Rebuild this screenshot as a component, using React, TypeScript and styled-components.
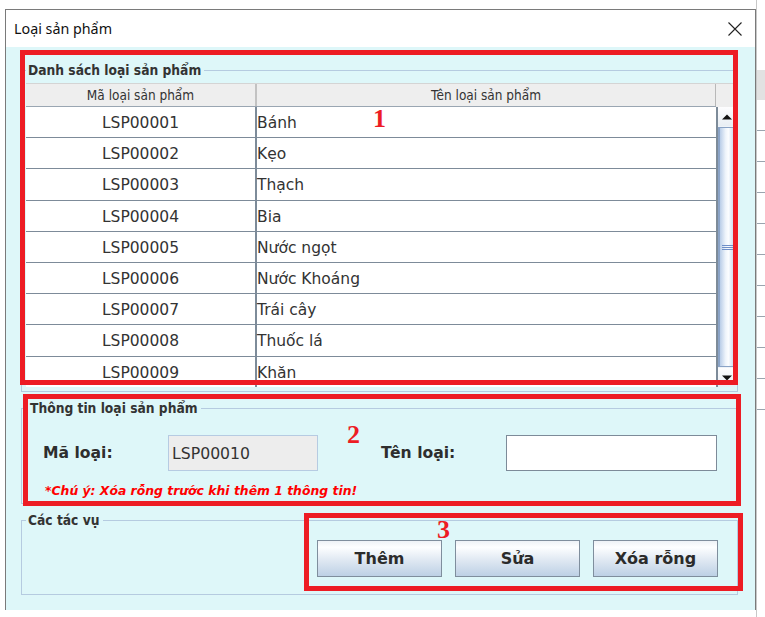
import styled, { createGlobalStyle } from "styled-components"

const GlobalStyle = createGlobalStyle`
  html, body {
    margin: 0;
    padding: 0;
  }
  body {
    background: #ffffff;
    font-family: "DejaVu Sans", Verdana, sans-serif;
    color: #333333;
  }
`

const Page = styled.div`
  display: flex;
  width: 765px;
  height: 617px;
  overflow: hidden;
  background: #ffffff;
`

const Window = styled.div`
  position: relative;
  display: flex;
  flex-direction: column;
  flex-shrink: 0;
  box-sizing: border-box;
  width: 751px;
  height: 601px;
  margin: 9px 0 0 5px;
  border: 1px solid #7a7a7a;
  background: #ffffff;
`

/* the app window behind the dialog, barely visible on the right */
const Backdrop = styled.div`
  flex: 1;
  border-left: 1px solid #c8c8c8;
  background:
    linear-gradient(#e2e2e2, #e2e2e2) 0 70px / 100% 30px no-repeat,
    repeating-linear-gradient(to bottom, transparent 0 30px, #9aa4ae 30px 31px) 0 100px / 100% 320px no-repeat,
    #ffffff;
`

const TitleBar = styled.div`
  display: flex;
  align-items: center;
  justify-content: space-between;
  flex-shrink: 0;
  height: 37px;
  padding: 0 13px 0 8px;
  font-family: "Noto Sans", sans-serif;
  font-size: 14.3px;
  color: #111111;
`

const Content = styled.div`
  flex: 1;
  display: flex;
  flex-direction: column;
  gap: 8px;
  padding: 15px 17px 15px 15px;
  background: #def7f9;
`

const Group = styled.fieldset`
  margin: 0;
  min-width: 0;
  padding: 0 2px 0 4px;
  border: 1px solid #b5cbe0;
`

const Legend = styled.legend<{ $inset?: number }>`
  margin-left: ${(p) => p.$inset ?? 0}px;
  padding: 0 3px 0 2px;
  font: bold 13.7px/16px "DejaVu Sans Condensed", "DejaVu Sans", sans-serif;
  color: #333333;
`

const TablePane = styled.div`
  display: grid;
  grid-template-columns: 1fr 19px;
  grid-template-rows: 24px 280px;
  margin: 5px 0 4px;
  background: #ffffff;
`

const HeaderRow = styled.div`
  display: grid;
  grid-template-columns: 229px 1fr;
  box-sizing: border-box;
  background: #eeeeee;
  border-top: 1px solid #d4d4d4;
  border-bottom: 1px solid #9aa6b2;
`

const HeaderCell = styled.div<{ $first?: boolean }>`
  font-family: "DejaVu Sans Condensed", "DejaVu Sans", sans-serif;
  font-size: 13.5px;
  line-height: 22px;
  text-align: center;
  color: #333333;
  border-left: ${(p) => (p.$first ? "none" : "2px solid #c2c2c2")};
  border-right: ${(p) => (p.$first ? "none" : "1px solid #b8b8b8")};
`

const HeaderCorner = styled.div`
  background: #eeeeee;
  border-top: 1px solid #d4d4d4;
`

const Body = styled.div`
  overflow: hidden;
`

const Row = styled.div`
  display: grid;
  grid-template-columns: 229px 1fr;
  box-sizing: border-box;
  height: 31.2px;
  border-bottom: 1px solid #7d8b99;
  font-size: 15.5px;
  color: #333333;
`

const Cell = styled.div<{ $first?: boolean }>`
  display: flex;
  align-items: center;
  justify-content: ${(p) => (p.$first ? "center" : "flex-start")};
  padding-top: 2px;
  white-space: nowrap;
  border-left: ${(p) => (p.$first ? "none" : "2px solid #7d8b99")};
`

const ScrollBar = styled.div`
  display: flex;
  flex-direction: column;
  gap: 1px;
  border-left: 2px solid #7d8b99;
  background: #eef3f8;
`

const ArrowButton = styled.div`
  display: flex;
  align-items: center;
  justify-content: center;
  height: 19px;
  background: linear-gradient(#fdfdfe, #e8eef4);
`

const Thumb = styled.div`
  flex: 1;
  display: flex;
  flex-direction: column;
  align-items: center;
  justify-content: center;
  gap: 1px;
  border: 1px solid #8aa3c6;
  border-left-width: 2px;
  background: linear-gradient(to right, #b9cde8, #eef4fb 40%, #fbfdff 60%, #c9d9ee);
`

const Grip = styled.span`
  width: 11px;
  height: 1px;
  background: #6f8fc8;
`

const InfoBody = styled.div`
  display: flex;
  flex-direction: column;
  padding: 19px 0 4px 17px;
`

const FieldRow = styled.div`
  display: flex;
  align-items: center;
  height: 36px;
`

const FieldLabel = styled.label<{ $spaced?: boolean }>`
  flex-shrink: 0;
  width: 125px;
  margin-left: ${(p) => (p.$spaced ? 63 : 0)}px;
  font: bold 15.6px "DejaVu Sans", sans-serif;
  color: #2e2e2e;
`

const TextBox = styled.input<{ $width: number; $locked?: boolean }>`
  box-sizing: border-box;
  flex-shrink: 0;
  width: ${(p) => p.$width}px;
  height: 36px;
  margin: 0;
  padding: 0 0 0 3px;
  border: 1px solid ${(p) => (p.$locked ? "#b6cbe2" : "#7d8b99")};
  border-radius: 0;
  background: ${(p) => (p.$locked ? "#ededed" : "#ffffff")};
  font: 15.7px "DejaVu Sans", sans-serif;
  color: #333333;
  outline: none;
`

const Note = styled.p`
  margin: 12px 0 0 2px;
  font: italic bold 12.4px/16px "DejaVu Sans", sans-serif;
  color: #ff0000;
`

const ActionsBody = styled.div`
  display: flex;
  justify-content: flex-end;
  gap: 13px;
  padding: 12px 17px 17px 0;
`

const ActionButton = styled.button`
  width: 125px;
  height: 37px;
  padding: 0;
  border: 1px solid #7f8e9d;
  border-radius: 0;
  background: linear-gradient(#eef2f6 0%, #fdfeff 18%, #dfe8f2 55%, #bdd0e5 100%);
  font: bold 16px "DejaVu Sans", sans-serif;
  color: #2b2b2b;
`

/* red annotation frames drawn over the dialog */
const Callout = styled.div<{ $x: number; $y: number; $w: number; $h: number }>`
  position: absolute;
  left: ${(p) => p.$x}px;
  top: ${(p) => p.$y}px;
  width: ${(p) => p.$w}px;
  height: ${(p) => p.$h}px;
  box-sizing: border-box;
  border: 5px solid #ed1c24;
  pointer-events: none;
`

const Marker = styled.span<{ $x: number; $y: number }>`
  position: absolute;
  left: ${(p) => p.$x}px;
  top: ${(p) => p.$y}px;
  font: bold 26px/1 "Liberation Serif", serif;
  color: #ed1c24;
`

const categories = [
  ["LSP00001", "Bánh"],
  ["LSP00002", "Kẹo"],
  ["LSP00003", "Thạch"],
  ["LSP00004", "Bia"],
  ["LSP00005", "Nước ngọt"],
  ["LSP00006", "Nước Khoáng"],
  ["LSP00007", "Trái cây"],
  ["LSP00008", "Thuốc lá"],
  ["LSP00009", "Khăn"],
]

const Arrow = ({ down }: { down?: boolean }) => (
  <svg width="10" height="6" viewBox="0 0 10 6">
    <path d={down ? "M0 0.5 L5 5.5 L10 0.5 Z" : "M0 5.5 L5 0.5 L10 5.5 Z"} fill="#111" />
  </svg>
)

export default function App() {
  return (
    <Page>
      <GlobalStyle />
      <Window>
        <TitleBar>
          <span>Loại sản phẩm</span>
          <svg width="14" height="14" viewBox="0 0 14 14">
            <path d="M0.5 0.5 L13.5 13.5 M13.5 0.5 L0.5 13.5" stroke="#222" strokeWidth="1.1" />
          </svg>
        </TitleBar>

        <Content>
          <Group>
            <Legend>Danh sách loại sản phẩm</Legend>
            <TablePane>
              <HeaderRow>
                <HeaderCell $first>Mã loại sản phẩm</HeaderCell>
                <HeaderCell>Tên loại sản phẩm</HeaderCell>
              </HeaderRow>
              <HeaderCorner />
              <Body>
                {categories.map(([code, name]) => (
                  <Row key={code}>
                    <Cell $first>{code}</Cell>
                    <Cell>{name}</Cell>
                  </Row>
                ))}
              </Body>
              <ScrollBar>
                <ArrowButton>
                  <Arrow />
                </ArrowButton>
                <Thumb>
                  <Grip />
                  <Grip />
                  <Grip />
                </Thumb>
                <ArrowButton>
                  <Arrow down />
                </ArrowButton>
              </ScrollBar>
            </TablePane>
          </Group>

          <Group>
            <Legend $inset={2}>Thông tin loại sản phẩm</Legend>
            <InfoBody>
              <FieldRow>
                <FieldLabel>Mã loại:</FieldLabel>
                <TextBox $width={150} $locked readOnly value="LSP00010" />
                <FieldLabel $spaced>Tên loại:</FieldLabel>
                <TextBox $width={211} defaultValue="" />
              </FieldRow>
              <Note>*Chú ý: Xóa rỗng trước khi thêm 1 thông tin!</Note>
            </InfoBody>
          </Group>

          <Group>
            <Legend>Các tác vụ</Legend>
            <ActionsBody>
              <ActionButton>Thêm</ActionButton>
              <ActionButton>Sửa</ActionButton>
              <ActionButton>Xóa rỗng</ActionButton>
            </ActionsBody>
          </Group>
        </Content>

        <Callout $x={14} $y={40} $w={718} $h={335} />
        <Callout $x={17} $y={384} $w={718} $h={112} />
        <Callout $x={298} $y={503} $w={439} $h={78} />
        <Marker $x={367} $y={96}>1</Marker>
        <Marker $x={341} $y={412}>2</Marker>
        <Marker $x={431} $y={507}>3</Marker>
      </Window>
      <Backdrop />
    </Page>
  )
}
